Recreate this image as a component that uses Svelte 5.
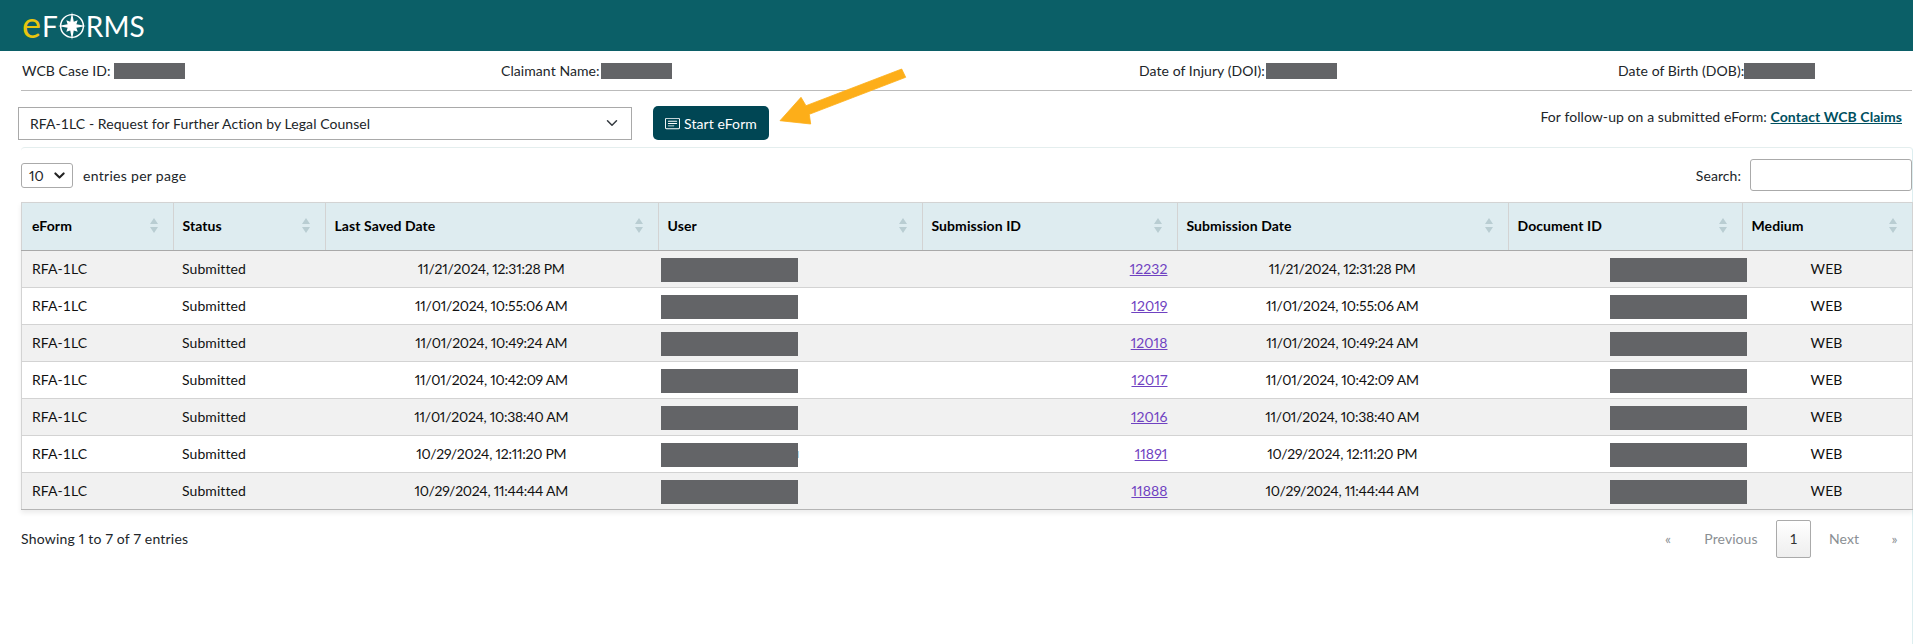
<script>
  const columns = [
    { label: 'eForm', width: 152 },
    { label: 'Status', width: 152 },
    { label: 'Last Saved Date', width: 333 },
    { label: 'User', width: 264 },
    { label: 'Submission ID', width: 255 },
    { label: 'Submission Date', width: 331 },
    { label: 'Document ID', width: 234 },
    { label: 'Medium', width: 170 }
  ];
  const rows = [
    { id: '12232', date: '11/21/2024, 12:31:28 PM' },
    { id: '12019', date: '11/01/2024, 10:55:06 AM' },
    { id: '12018', date: '11/01/2024, 10:49:24 AM' },
    { id: '12017', date: '11/01/2024, 10:42:09 AM' },
    { id: '12016', date: '11/01/2024, 10:38:40 AM' },
    { id: '11891', date: '10/29/2024, 12:11:20 PM', peek: true },
    { id: '11888', date: '10/29/2024, 11:44:44 AM' }
  ];
</script>

<div class="page">
  <header class="topbar">
    <div class="logo">
      <span class="e">e</span><span>F</span><svg class="compass" viewBox="-16 -16 32 32" aria-hidden="true">
        <circle r="13" fill="none" stroke="#fff" stroke-width="1.7"/>
        <path d="M0-16 2-5 6.500-6.500 5-2 16 0 5 2 6.500 6.500 2 5 0 16-2 5-6.500 6.500-5 2-16 0-5-2-6.500-6.500-2-5Z" fill="#fff"/>
      </svg><span>RMS</span>
    </div>
  </header>

  <div class="info">
    <div class="item w1">WCB Case ID:<span class="mask small m1"></span></div>
    <div class="item w2">Claimant Name:<span class="mask small m2"></span></div>
    <div class="item w3">Date of Injury (DOI):<span class="mask small m3"></span></div>
    <div class="item">Date of Birth (DOB):<span class="mask small m4"></span></div>
  </div>

  <div class="actions">
    <div class="select">
      <span>RFA-1LC - Request for Further Action by Legal Counsel</span>
      <svg viewBox="0 0 16 16" width="12" height="12" aria-hidden="true"><path d="M2 5l6 6 6-6" fill="none" stroke="#343a40" stroke-width="2" stroke-linecap="round" stroke-linejoin="round"/></svg>
    </div>
    <button class="start">
      <svg viewBox="0 0 16 16" width="15" height="15" fill="currentColor" aria-hidden="true">
        <path d="M14.5 3a.5.5 0 0 1 .5.5v9a.5.5 0 0 1-.5.5h-13a.5.5 0 0 1-.5-.5v-9a.5.5 0 0 1 .5-.5h13zm-13-1A1.5 1.5 0 0 0 0 3.5v9A1.5 1.5 0 0 0 1.5 14h13a1.5 1.5 0 0 0 1.5-1.5v-9A1.5 1.5 0 0 0 14.5 2h-13z"/>
        <path d="M3 5.5a.5.5 0 0 1 .5-.5h9a.5.5 0 0 1 0 1h-9a.5.5 0 0 1-.5-.5zM3 8a.5.5 0 0 1 .5-.5h9a.5.5 0 0 1 0 1h-9A.5.5 0 0 1 3 8zm0 2.5a.5.5 0 0 1 .5-.5h6a.5.5 0 0 1 0 1h-6a.5.5 0 0 1-.5-.5z"/>
      </svg>
      Start eForm
    </button>
    <p class="follow">For follow-up on a submitted eForm: <a href="#contact">Contact WCB Claims</a></p>
    <svg class="arrow" viewBox="0 0 140 70" width="140" height="70" aria-hidden="true">
      <path d="M10 55.700 31 32.300 36 40.700 131.700 4 135.700 12.300 39.300 49.300 40.700 59Z" fill="#fdae19" stroke="#fdae19" stroke-width="0.8" stroke-linejoin="round"/>
    </svg>
  </div>

  <section class="card">
    <div class="controls">
      <div class="length">
        <div class="mini-select"><span class="num">10</span>
          <svg viewBox="0 0 16 16" width="11" height="11" aria-hidden="true"><path d="M2 5l6 6 6-6" fill="none" stroke="#222" stroke-width="3" stroke-linecap="round" stroke-linejoin="round"/></svg>
        </div>
        <span class="entries">entries per page</span>
      </div>
      <label class="search">Search: <input type="search" /></label>
    </div>

    <table>
      <colgroup>
        {#each columns as c}<col style="width: {c.width}px" />{/each}
      </colgroup>
      <thead>
        <tr>
          {#each columns as c}
            <th>
              <div class="th">
                <span>{c.label}</span>
                <svg viewBox="0 0 8 15" width="8" height="15" aria-hidden="true"><path d="M4 0l4 6H0zM4 15l4-6H0z" fill="#b9cdd2"/></svg>
              </div>
            </th>
          {/each}
        </tr>
      </thead>
      <tbody>
        {#each rows as r}
          <tr>
            <td>RFA-1LC</td>
            <td>Submitted</td>
            <td class="c num date">{r.date}</td>
            <td class="user"><span class="mask big" class:peek={r.peek}></span></td>
            <td class="r num"><a href="#{r.id}">{r.id}</a></td>
            <td class="c num date">{r.date}</td>
            <td class="doc"><span class="mask big"></span></td>
            <td class="c">WEB</td>
          </tr>
        {/each}
      </tbody>
    </table>

    <div class="foot">
      <span class="num showing">Showing 1 to 7 of 7 entries</span>
      <nav class="pager">
        <span class="pg first">«</span>
        <span class="pg prev">Previous</span>
        <span class="pg cur">1</span>
        <span class="pg next">Next</span>
        <span class="pg last">»</span>
      </nav>
    </div>
  </section>
</div>

<style>
  :global(body) {
    margin: 0;
    background: #fff;
    font-family: "Lato", "Liberation Sans", sans-serif;
    font-size: 14px;
    letter-spacing: 0.07px;
    color: #212529;
  }
  .page { width: 1913px; height: 644px; overflow: hidden; display: flex; flex-direction: column; }
  .topbar { flex: none; height: 51px; width: 1920px; background: #0b5f67; display: flex; align-items: center; padding-left: 22px; box-sizing: border-box; }
  .logo { display: flex; align-items: center; font-family: "Lato", sans-serif; font-weight: 400; font-size: 28px; letter-spacing: 0; line-height: 1; color: #fff; }
  .logo .e { color: #e8c50f; font-size: 36px; font-weight: 400; margin-top: -3px; margin-right: 1px; }
  .compass { width: 28px; height: 28px; margin: 0; }

  .info { flex: none; display: flex; align-items: center; height: 39px; margin: 0 1px 0 21px; padding-left: 1px; border-bottom: 1px solid #bbb; box-sizing: content-box; }
  .item { display: flex; align-items: center; white-space: pre; }
  .w1 { width: 479px; }
  .w2 { width: 638px; }
  .w3 { width: 479px; }
  .mask { display: inline-block; background: #636467; }
  .small { width: 71px; height: 16px; }
  .m1 { margin-left: 3px; }
  .m2 { margin-left: 1px; }
  .m3 { margin-left: 1px; }
  .m4 { margin-left: 0; }
  .big { width: 137px; height: 24px; vertical-align: middle; }
  .peek { position: relative; }
  .peek::after { content: ""; position: absolute; left: 100%; top: 8px; width: 1px; height: 7px; background: #a8d8ee; }

  .actions { flex: none; position: relative; display: flex; align-items: center; height: 56px; padding-left: 18px; box-sizing: border-box; padding-top: 8px; }
  .select { width: 614px; height: 33px; box-sizing: border-box; border: 1px solid #a9a9a9; display: flex; align-items: center; justify-content: space-between; padding: 0 13px 0 11px; }
  .start { margin-left: 21px; width: 116px; height: 34px; border: 0; border-radius: 5px; background: #004654; color: #fff; font: inherit; letter-spacing: inherit; display: flex; align-items: center; justify-content: center; gap: 4px; padding: 0; }
  .follow { margin: 0 0 0 auto; padding: 0 11px 14px 0; }
  .follow a { color: #00505f; font-weight: 700; }
  .arrow { position: absolute; left: 770px; top: -26px; overflow: visible; }

  .card { flex: 1; margin-left: 21px; border-top: 1px solid #e4eeee; border-right: 1px solid #ddeef0; border-top-right-radius: 4px; border-top-left-radius: 4px; }
  .controls { display: flex; justify-content: space-between; align-items: center; height: 54px; padding-top: 0; box-sizing: border-box; }
  .length { display: flex; align-items: center; gap: 10px; }
  .entries { letter-spacing: 0.3px; }
  .mini-select { width: 52px; height: 25px; box-sizing: border-box; border: 1px solid #aaa; border-radius: 3px; display: flex; align-items: center; justify-content: space-between; padding: 0 7px; }
  .search { display: flex; align-items: center; gap: 9px; }
  .search input { width: 162px; height: 32px; box-sizing: border-box; border: 1px solid #aaa; border-radius: 3px; margin: 0; padding: 0; background: #fff; }

  table { width: 1891px; table-layout: fixed; border-collapse: collapse; box-shadow: 0 3px 5px rgba(0,0,0,.08); }
  th { height: 48px; padding: 0 10px 2px 8.5px; background: #deecf0; color: #000; font-weight: 700; text-align: left; border-top: 1px solid #d3d3d3; border-right: 1px solid #d3d3d3; border-bottom: 1px solid #a9a9a9; box-sizing: border-box; }
  th:first-child { border-left: 1px solid #d3d3d3; padding-left: 10px; }
  .th { display: flex; align-items: center; justify-content: space-between; padding-right: 5px; }
  td { height: 37px; padding: 0 10px 2px 8.5px; box-sizing: border-box; border-bottom: 1px solid #d3d3d3; color: #111; white-space: nowrap; }
  td:first-child { border-left: 1px solid #d3d3d3; padding-left: 10px; }
  td:last-child { border-right: 1px solid #d3d3d3; }
  tbody tr:nth-child(odd) td { background: #f1f1f1; }
  tbody tr:last-child td { border-bottom: 1px solid #b5b5b5; }
  .num { font-variant-numeric: proportional-nums; font-feature-settings: "pnum"; }
  .date { letter-spacing: -0.25px; }
  .showing { letter-spacing: 0.2px; }
  .c { text-align: center; }
  .r { text-align: right; padding-right: 10px; }
  .r a { color: #6f42c1; }
  .user { padding-left: 2px; padding-top: 2px; padding-bottom: 0; }
  .doc { text-align: right; padding-right: 0; padding-top: 2px; padding-bottom: 0; }
  .doc .mask { margin-right: -4px; position: relative; z-index: 1; }

  .foot { display: flex; justify-content: space-between; align-items: center; height: 48px; padding-top: 1px; margin-top: 4px; box-sizing: border-box; }
  .pager { display: flex; align-items: center; color: #8b8f94; }
  .pg { display: flex; align-items: center; justify-content: center; }
  .first { width: 36px; }
  .prev { width: 90px; }
  .cur { width: 35px; height: 38px; box-sizing: border-box; border: 1px solid #aaa; border-radius: 2px; background: linear-gradient(#fff, #eee); color: #333; }
  .next { width: 66px; }
  .last { width: 35px; }
</style>
